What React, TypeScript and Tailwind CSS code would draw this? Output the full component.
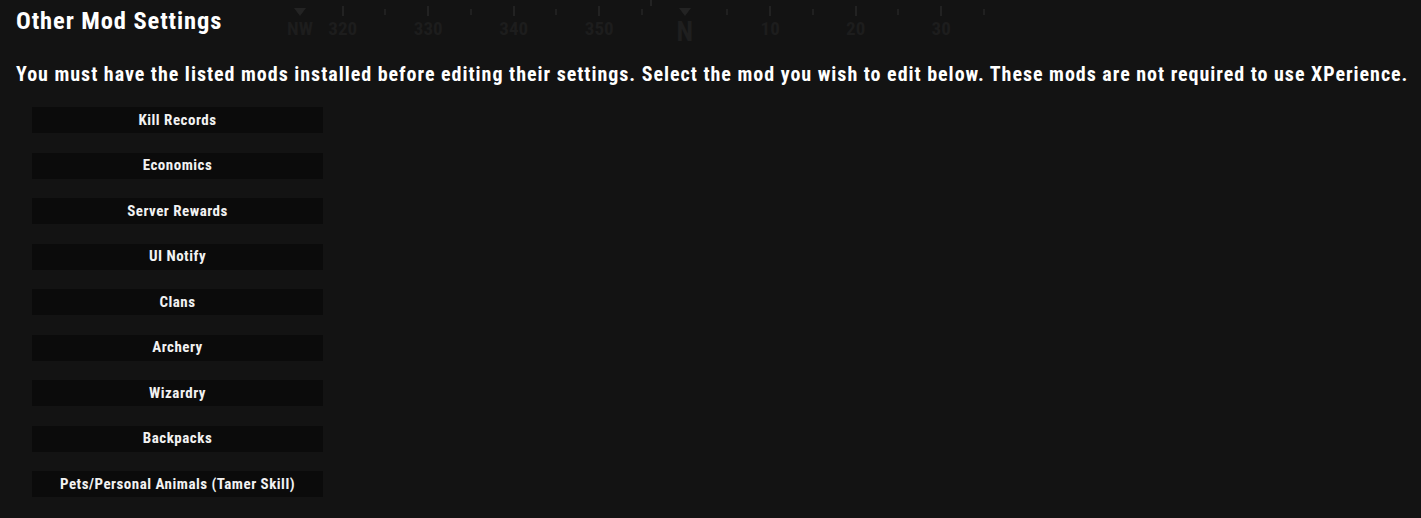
import React from "react";

const mods = [
  "Kill Records",
  "Economics",
  "Server Rewards",
  "UI Notify",
  "Clans",
  "Archery",
  "Wizardry",
  "Backpacks",
  "Pets/Personal Animals (Tamer Skill)",
];

type Tick = { kind: "big" | "small" | "tri"; label?: string };

const ticks: Tick[] = [
  { kind: "tri", label: "NW" },
  { kind: "big", label: "320" },
  { kind: "small" },
  { kind: "big", label: "330" },
  { kind: "small" },
  { kind: "big", label: "340" },
  { kind: "small" },
  { kind: "big", label: "350" },
  { kind: "small" },
  { kind: "tri", label: "N" },
  { kind: "small" },
  { kind: "big", label: "10" },
  { kind: "small" },
  { kind: "big", label: "20" },
  { kind: "small" },
  { kind: "big", label: "30" },
  { kind: "small" },
];

function Compass() {
  return (
    <div className="pointer-events-none absolute left-[278.6px] top-0 flex">
      {ticks.map((t, i) => (
        <div key={i} className="flex w-[42.75px] flex-col items-center">
          <div className="flex h-[17px] items-end">
            {t.kind === "tri" && (
              <div className="mb-[1px] h-0 w-0 border-x-[6px] border-t-[8px] border-x-transparent border-t-[#232323]" />
            )}
            {t.kind === "big" && <div className="mb-[1px] h-[10px] w-[2px] bg-[#222222]" />}
            {t.kind === "small" && <div className="mb-[2px] h-[6px] w-[2px] bg-[#202020]" />}
          </div>
          {t.label === "N" ? (
            <span className="text-[27px] font-bold leading-[30px] text-[#1f1f1f]">N</span>
          ) : (
            <span className="text-[19px] font-bold leading-[24px] text-[#1d1d1d]">{t.label}</span>
          )}
        </div>
      ))}
      <div className="absolute left-[371.4px] top-0 h-[6px] w-[2px] bg-[#232323]" />
    </div>
  );
}

export default function App() {
  return (
    <div
      className="relative h-[518px] w-[1421px] overflow-hidden bg-[#131313] text-white font-stretch-condensed"
      style={{ fontFamily: "Roboto, 'Liberation Sans', sans-serif" }}
    >
      <Compass />
      <div className="relative flex flex-col px-4 pt-[6px]">
        <h1 className="text-[24.5px] font-bold leading-[30px] tracking-[0.9px]">Other Mod Settings</h1>
        <p className="mt-[26px] whitespace-nowrap text-[20px] font-bold leading-[24px] tracking-[0.97px]">
          You must have the listed mods installed before editing their settings. Select the mod you wish to edit below. These mods are not required to use XPerience.
        </p>
        <div className="mt-[21px] flex flex-col gap-[19.5px] pl-4">
          {mods.map((m) => (
            <button
              key={m}
              className="flex h-[26px] w-[291px] items-center justify-center bg-[#0b0b0b] text-[15px] font-bold tracking-[0.5px] text-[#f2f2f2]"
            >
              {m}
            </button>
          ))}
        </div>
      </div>
    </div>
  );
}
